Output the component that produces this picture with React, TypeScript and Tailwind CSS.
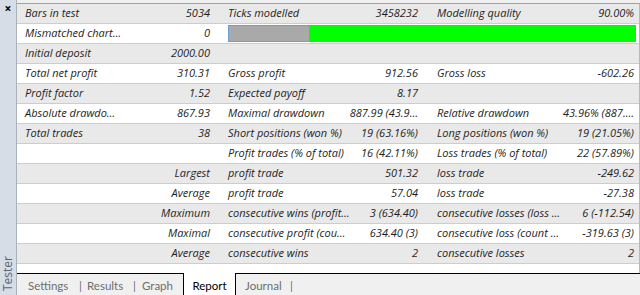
import React from "react";

type Row = [string, string, string, string, string, string];

const rows: (Row | "bar")[] = [
  ["Bars in test", "5034", "Ticks modelled", "3458232", "Modelling quality", "90.00%"],
  "bar",
  ["Initial deposit", "2000.00", "", "", "", ""],
  ["Total net profit", "310.31", "Gross profit", "912.56", "Gross loss", "-602.26"],
  ["Profit factor", "1.52", "Expected payoff", "8.17", "", ""],
  ["Absolute drawdo…", "867.93", "Maximal drawdown", "887.99 (43.9…", "Relative drawdown", "43.96% (887.…"],
  ["Total trades", "38", "Short positions (won %)", "19 (63.16%)", "Long positions (won %)", "19 (21.05%)"],
  ["", "", "Profit trades (% of total)", "16 (42.11%)", "Loss trades (% of total)", "22 (57.89%)"],
  ["", "Largest", "profit trade", "501.32", "loss trade", "-249.62"],
  ["", "Average", "profit trade", "57.04", "loss trade", "-27.38"],
  ["", "Maximum", "consecutive wins (profit…", "3 (634.40)", "consecutive losses (loss …", "6 (-112.54)"],
  ["", "Maximal", "consecutive profit (cou…", "634.40 (3)", "consecutive loss (count …", "-319.63 (3)"],
  ["", "Average", "consecutive wins", "2", "consecutive losses", "2"],
];

export default function App() {
  return (
    <div
      className="w-[640px] h-[295px] overflow-hidden flex bg-[#f0f0f0] text-[#1e1e1e]"
      style={{ fontFamily: '"Open Sans", "Noto Sans", sans-serif' }}
    >
      {/* left strip */}
      <div className="w-[17px] h-full bg-[#d6dde6] border-r border-[#a9b1bb] flex flex-col items-center justify-between">
        <span className="text-[12px] leading-none font-bold mt-[3px] text-black">×</span>
        <span
          className="text-[12px] leading-none text-[#5b6877] mb-[4px] whitespace-nowrap"
          style={{ writingMode: "vertical-rl", transform: "rotate(180deg)" }}
        >
          Tester
        </span>
      </div>
      {/* main */}
      <div className="flex-1 flex flex-col h-full">
        <div className="pt-[3px] bg-[#f0f0f0]">
          <div className="border-t border-[#a0a0a0] bg-white border-r border-r-[#b8b8b8]">
            {rows.map((r, i) => {
              const bg = i % 2 === 0 ? "bg-[#e9e9e9]" : "bg-white";
              if (r === "bar") {
                return (
                  <div key={i} className={`flex h-[20px] border-b border-[#cdcdcd] ${bg} italic text-[11px]`}>
                    <div className="w-[202px] flex items-center justify-between pl-[8px] pr-[9px]">
                      <span>Mismatched chart…</span>
                      <span>0</span>
                    </div>
                    <div className="flex-1 flex items-center pl-[9px] pr-[3px]">
                      <div className="flex w-full h-[17px] border border-[#6a9fd4]">
                        <div className="w-[80px] h-full bg-[#a9a9a9]" />
                        <div className="flex-1 h-full bg-[#00ff00]" />
                      </div>
                    </div>
                  </div>
                );
              }
              return (
                <div key={i} className={`flex h-[20px] border-b border-[#cdcdcd] ${bg} italic text-[11px] whitespace-nowrap`}>
                  <div className="w-[202px] flex items-center justify-between pl-[8px] pr-[9px]">
                    <span>{r[0]}</span>
                    <span>{r[1]}</span>
                  </div>
                  <div className="w-[209px] flex items-center justify-between pl-[9px] pr-[10px]">
                    <span>{r[2]}</span>
                    <span>{r[3]}</span>
                  </div>
                  <div className="flex-1 flex items-center justify-between pl-[9px] pr-[5px]">
                    <span>{r[4]}</span>
                    <span>{r[5]}</span>
                  </div>
                </div>
              );
            })}
            <div className="h-[9px] bg-white" />
          </div>
        </div>
        {/* tabs */}
        <div
          className="flex-1 border-t border-black bg-[#f0f0f0] flex items-start text-[11.5px] text-[#6e6e6e] whitespace-nowrap"
          style={{ fontFamily: 'Lato, "Open Sans", sans-serif' }}
        >
          <span className="ml-[11px] mt-[3px] w-[40px] min-w-0 shrink-0">Settings</span>
          <span className="ml-[11px] mt-[3px] w-[3px] min-w-0 shrink-0">|</span>
          <span className="ml-[5px] mt-[3px] w-[36px] min-w-0 shrink-0">Results</span>
          <span className="ml-[10px] mt-[3px] w-[3px] min-w-0 shrink-0">|</span>
          <span className="ml-[6px] mt-[3px] w-[27px] min-w-0 shrink-0">Graph</span>
          <span className="ml-[14px] -mt-px h-[23px] w-[53px] shrink-0 flex justify-center bg-white border border-black border-t-0 text-black pt-[4px]">Report</span>
          <span className="ml-[9px] mt-[3px] w-[34px] min-w-0 shrink-0">Journal</span>
          <span className="ml-[11px] mt-[3px]">|</span>
        </div>
      </div>
    </div>
  );
}
